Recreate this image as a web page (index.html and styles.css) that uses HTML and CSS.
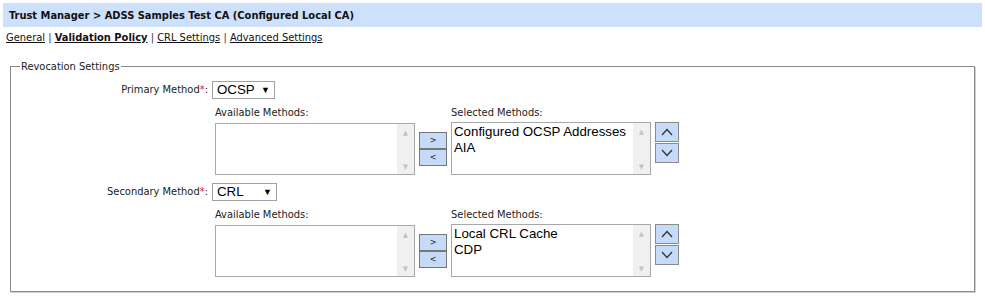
FILE: index.html
```html
<!DOCTYPE html>
<html lang="en">
<head>
    <meta charset="UTF-8">
    <meta name="viewport" content="width=device-width, initial-scale=1.0">
    <title>Trust Manager - Validation Policy</title>
    <link rel="stylesheet" href="styles.css">
</head>
<body>
    <div class="page">
        <h1 class="title">Trust Manager &gt; ADSS Samples Test CA (Configured Local CA)</h1>
        <nav class="tabs">
            <a href="#">General</a> <span class="sep">|</span>
            <a href="#" class="current">Validation Policy</a> <span class="sep">|</span>
            <a href="#">CRL Settings</a> <span class="sep">|</span>
            <a href="#">Advanced Settings</a>
        </nav>

        <fieldset class="group">
            <legend>Revocation Settings</legend>

            <!-- primary method -->
            <label class="field-label">Primary Method<span class="req">*</span>:</label>
            <div class="dropdown primary">OCSP <span class="caret">&#9660;</span></div>

            <div class="methods">
                <span class="box-label">Available Methods:</span>
                <span class="box-label col3">Selected Methods:</span>
                <div class="listbox">
                    <div class="items"></div>
                    <div class="scroll"><span>&#9650;</span><span>&#9660;</span></div>
                </div>
                <div class="move">
                    <button type="button">&gt;</button>
                    <button type="button">&lt;</button>
                </div>
                <div class="listbox selected">
                    <div class="items">
                        <div>Configured OCSP Addresses</div>
                        <div>AIA</div>
                    </div>
                    <div class="scroll"><span>&#9650;</span><span>&#9660;</span></div>
                </div>
                <div class="order">
                    <button type="button"><svg width="12" height="8" viewBox="0 0 12 8"><polyline points="1,7 6,1.5 11,7" /></svg></button>
                    <button type="button"><svg width="12" height="8" viewBox="0 0 12 8"><polyline points="1,1 6,6.5 11,1" /></svg></button>
                </div>
            </div>

            <!-- secondary method -->
            <label class="field-label second">Secondary Method<span class="req">*</span>:</label>
            <div class="dropdown secondary second">CRL <span class="caret">&#9660;</span></div>

            <div class="methods">
                <span class="box-label">Available Methods:</span>
                <span class="box-label col3">Selected Methods:</span>
                <div class="listbox">
                    <div class="items"></div>
                    <div class="scroll"><span>&#9650;</span><span>&#9660;</span></div>
                </div>
                <div class="move">
                    <button type="button">&gt;</button>
                    <button type="button">&lt;</button>
                </div>
                <div class="listbox selected">
                    <div class="items">
                        <div>Local CRL Cache</div>
                        <div>CDP</div>
                    </div>
                    <div class="scroll"><span>&#9650;</span><span>&#9660;</span></div>
                </div>
                <div class="order">
                    <button type="button"><svg width="12" height="8" viewBox="0 0 12 8"><polyline points="1,7 6,1.5 11,7" /></svg></button>
                    <button type="button"><svg width="12" height="8" viewBox="0 0 12 8"><polyline points="1,1 6,6.5 11,1" /></svg></button>
                </div>
            </div>
        </fieldset>
    </div>
</body>
</html>
```
FILE: styles.css
```css
body {
    margin: 0;
    background-color: #fff;
    font-family: "DejaVu Sans Condensed", "DejaVu Sans", sans-serif;
    font-stretch: condensed;
    font-size: 11px;
    color: #222;
}

.page {
    padding: 3px;
}

.title {
    margin: 0;
    height: 24px;
    line-height: 25px;
    padding-left: 6px;
    background-color: #cde0fc;
    font-size: 11px;
    font-weight: bold;
    color: #111;
}

.tabs {
    margin: 4px 0 0 3px;
    line-height: 14px;
    height: 14px;
}

.tabs a {
    color: #111;
    text-decoration: underline;
}

.tabs a.current {
    font-weight: bold;
}

.tabs .sep {
    color: #4a2a6a;
}

.group {
    margin: 15px 7px 0 7px;
    padding: 0 0 14px 0;
    border: 1px solid #8a8a8a;
    box-shadow: 1px 1px 0 #d0d0d0;
    display: grid;
    grid-template-columns: 197px auto;
    column-gap: 4px;
    justify-content: start;
}

.group legend {
    margin-left: 9px;
    padding: 0 1px;
    line-height: 13px;
}

.field-label {
    text-align: right;
    line-height: 18px;
    margin-top: 8px;
}

.field-label.second,
.dropdown.second {
    margin-top: 8px;
}

.req {
    color: #e02020;
}

.dropdown {
    margin-top: 8px;
    height: 16px;
    border: 1px solid #a0a0a0;
    font-family: "Liberation Sans", Arial, sans-serif;
    font-size: 13.3px;
    line-height: 16px;
    color: #000;
    padding-left: 4px;
    position: relative;
    box-sizing: content-box;
}

.dropdown.primary {
    width: 57px;
}

.dropdown.secondary {
    width: 59px;
}

.caret {
    position: absolute;
    right: 4px;
    top: 0;
    font-size: 9px;
}

.methods {
    grid-column: 2;
    margin-left: 3px;
    margin-top: 7px;
    display: grid;
    grid-template-columns: 200px 28px 200px 24px;
    column-gap: 4px;
    align-items: center;
}

.box-label {
    grid-row: 1;
    grid-column: 1;
    line-height: 13px;
    margin-bottom: 3px;
}

.box-label.col3 {
    grid-column: 3;
}

.listbox {
    grid-row: 2;
    height: 50px;
    border: 1px solid #a8a8a8;
    display: flex;
    background-color: #fff;
}

.listbox.selected {
    grid-column: 3;
    height: 51px;
}

.items {
    flex: 1;
    padding: 1px 2px;
    font-family: "Liberation Sans", Arial, sans-serif;
    font-size: 13.3px;
    line-height: 16px;
    color: #000;
}

.scroll {
    width: 17px;
    background-color: #f0f0f0;
    display: flex;
    flex-direction: column;
    justify-content: space-between;
    align-items: center;
    padding: 5px 0 3px;
    font-size: 7px;
    color: #c2c2c2;
}

.move {
    grid-row: 2;
    grid-column: 2;
    display: flex;
    flex-direction: column;
}

.move button {
    height: 17px;
    padding: 0;
    border: 1px solid #777;
    background-color: #c6dbfa;
    font-family: "DejaVu Sans", sans-serif;
    font-size: 8px;
    color: #222;
}

.order {
    grid-row: 2;
    grid-column: 4;
    align-self: start;
    display: flex;
    flex-direction: column;
    gap: 1px;
}

.order button {
    height: 20px;
    padding: 0;
    border: 1px solid #8a8a8a;
    background-color: #c6dbfa;
    display: flex;
    align-items: center;
    justify-content: center;
}

.order svg polyline {
    fill: none;
    stroke: #333;
    stroke-width: 1.3;
}
```
